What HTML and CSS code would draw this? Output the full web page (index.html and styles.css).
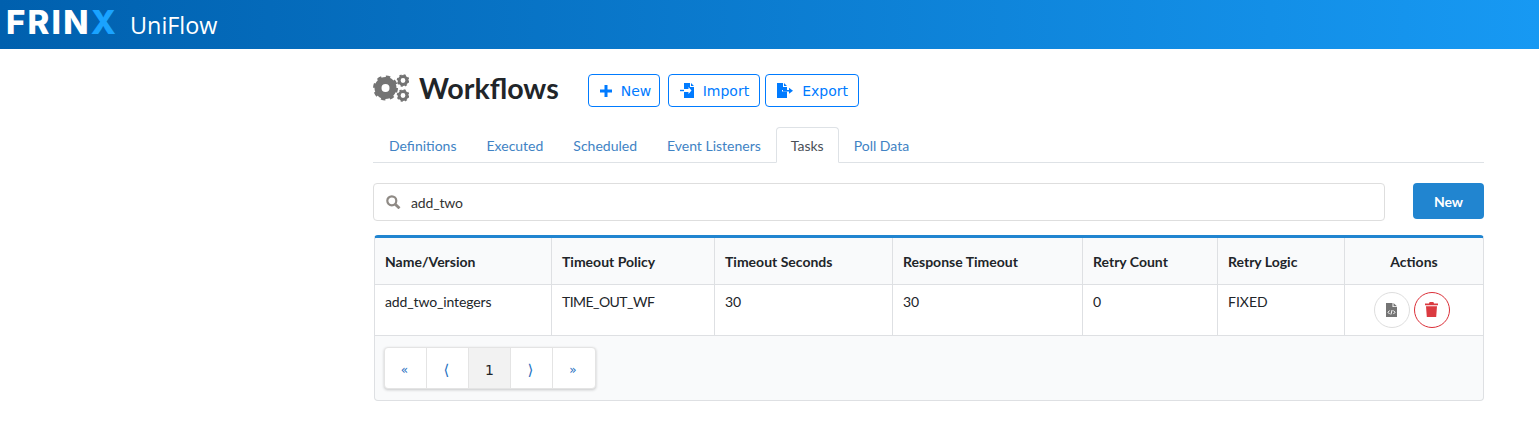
FILE: index.html
```html
<!DOCTYPE html>
<html lang="en">

<head>
    <meta charset="UTF-8">
    <title>UniFlow</title>
    <link rel="stylesheet" href="styles.css">
</head>

<body>
    <div class="topbar">
        <span class="logo">FRIN<span class="logo-x">X</span></span>
        <span class="app-name">UniFlow</span>
    </div>

    <div class="content">
        <div class="title-row">
            <svg class="gears" width="36" height="28" viewBox="0 0 36 28">
                <g fill="none" stroke="#747474">
                    <circle cx="12.5" cy="14" r="7.5" stroke-width="7"/>
                    <circle cx="12.5" cy="14" r="11" stroke-width="3" stroke-dasharray="4.3 4.34"/>
                    <circle cx="30" cy="6.500" r="3.900" stroke-width="3"/>
                    <circle cx="30" cy="6.500" r="5.500" stroke-width="1.600" stroke-dasharray="2.160 2.160"/>
                    <circle cx="30" cy="21.500" r="3.900" stroke-width="3"/>
                    <circle cx="30" cy="21.500" r="5.500" stroke-width="1.600" stroke-dasharray="2.160 2.160"/>
                </g>
            </svg>
            <h1 class="title">Workflows</h1>
            <div class="title-btns">
                <button class="btn-outline btn-add">
                    <svg width="12" height="12" viewBox="0 0 12 12"><path d="M4.500 0h3v4.500H12v3H7.500V12h-3V7.500H0v-3h4.500z" fill="#007bff"/></svg>
                    New
                </button>
                <button class="btn-outline">
                    <svg width="15" height="15" viewBox="0 0 15 15"><path d="M4 0h6v4h4v11H4V9h4.500v2l3-3.500-3-3.500v2H4zM11 0l3 3h-3z" fill="#007bff"/><path d="M0 6.800h4v1.400H0z" fill="#007bff"/></svg>
                    Import
                </button>
                <button class="btn-outline">
                    <svg width="17" height="15" viewBox="0 0 17 15"><path d="M0 0h6v4h4v3H5v1.500h5V15H0zM7 0l3 3H7z" fill="#007bff"/><path d="M6 7h6V4.800L16 7.700l-4 3V8.500H6z" fill="#007bff"/></svg>
                    Export
                </button>
            </div>
        </div>

        <ul class="tabs">
            <li><a href="#">Definitions</a></li>
            <li><a href="#">Executed</a></li>
            <li><a href="#">Scheduled</a></li>
            <li><a href="#">Event Listeners</a></li>
            <li class="active"><a href="#">Tasks</a></li>
            <li><a href="#">Poll Data</a></li>
        </ul>

        <div class="search-row">
            <div class="search">
                <svg width="15" height="14" viewBox="0 0 15 14"><circle cx="5.800" cy="5.800" r="4.500" fill="none" stroke="#8f8a85" stroke-width="2.200"/><path d="M9.200 9.200L13.500 13.300" stroke="#8f8a85" stroke-width="2.800"/></svg>
                <span class="search-text">add_two</span>
            </div>
            <button class="btn-new">New</button>
        </div>

        <div class="table-box">
            <table class="task-table">
                <colgroup>
                    <col class="c1"><col class="c2"><col class="c3"><col class="c4"><col class="c5"><col class="c6"><col>
                </colgroup>
                <thead>
                    <tr>
                        <th>Name/Version</th>
                        <th>Timeout Policy</th>
                        <th>Timeout Seconds</th>
                        <th>Response Timeout</th>
                        <th>Retry Count</th>
                        <th>Retry Logic</th>
                        <th class="center">Actions</th>
                    </tr>
                </thead>
                <tbody>
                    <tr>
                        <td class="name-cell">add_two_integers</td>
                        <td class="policy-cell">TIME_OUT_WF</td>
                        <td>30</td>
                        <td>30</td>
                        <td>0</td>
                        <td>FIXED</td>
                        <td class="center actions">
                            <button class="circle">
                                <svg width="11" height="14" viewBox="0 0 11 14"><path d="M0 0h6.500v4H11v10H0zM7.500 0L11 3.200H7.500z" fill="#747474"/><path d="M3.600 7.500L2 9.300l1.600 1.800M7.400 7.500L9 9.300l-1.600 1.800M6.100 7L4.900 11.500" fill="none" stroke="#fff" stroke-width="1"/></svg>
                            </button>
                            <button class="circle red">
                                <svg width="13" height="15" viewBox="0 0 13 15"><path d="M0 1.500h4L4.600 0h3.800L9 1.500h4V3.300H0zM1 4.300h11L11.200 15H1.800z" fill="#db3a40"/></svg>
                            </button>
                        </td>
                    </tr>
                </tbody>
            </table>
            <div class="table-foot">
                <ul class="pager">
                    <li>«</li>
                    <li class="arrow">⟨</li>
                    <li class="current">1</li>
                    <li class="arrow">⟩</li>
                    <li>»</li>
                </ul>
            </div>
        </div>
    </div>
</body>

</html>
```

FILE: styles.css
```css
* {
    margin: 0;
    padding: 0;
    box-sizing: border-box;
    list-style: none;
    text-decoration: none;
}

body {
    font-family: "Lato", "Liberation Sans", sans-serif;
    font-size: 14px;
    color: #212529;
    background: #fff;
}

.topbar {
    height: 49px;
    display: flex;
    align-items: center;
    padding-left: 6px;
    background: linear-gradient(to right, #0060ae, #1799f3);
}

.logo {
    font-family: "Inter", "Liberation Sans", sans-serif;
    font-weight: 800;
    font-size: 33px;
    letter-spacing: 2.2px;
    color: #fff;
    line-height: 45px;
    height: 49px;
    width: 124px;
}

.logo-x {
    color: #1aa3ff;
}

.app-name {
    font-family: "Open Sans", "Liberation Sans", sans-serif;
    font-size: 23.4px;
    color: #fff;
}

.content {
    width: 1111px;
    margin-left: 373px;
}

.title-row {
    display: flex;
    align-items: center;
    height: 78px;
    padding-top: 5px;
}

.gears {
    margin: -6px 10px 0 0;
}

.title {
    font-size: 28.6px;
    font-weight: 700;
    line-height: 34px;
    margin: -6px 29px 0 0;
}

.title-btns {
    display: flex;
    gap: 5px;
}

.title-btns .btn-add {
    margin-right: 3px;
    width: 72px;
    padding-right: 8px;
    gap: 9px;
}

.btn-outline {
    height: 33px;
    padding: 0 10px 0 11px;
    display: flex;
    align-items: center;
    gap: 8px;
    font-family: "DejaVu Sans", sans-serif;
    font-size: 14px;
    color: #007bff;
    background: #fff;
    border: 1px solid #007bff;
    border-radius: 4px;
}

.btn-outline svg {
    flex-shrink: 0;
}

.tabs {
    display: flex;
    height: 36px;
    padding-left: 1px;
    border-bottom: 1px solid #dee2e6;
}

.tabs li {
    height: 36px;
    padding: 0 14px;
    line-height: 36px;
    border: 1px solid transparent;
    border-radius: 4px 4px 0 0;
}

.tabs a {
    color: #4183c4;
}

.tabs .active {
    background: #fff;
    border-color: #dee2e6 #dee2e6 #fff;
}

.tabs .active a {
    color: #495057;
}

.search-row {
    display: flex;
    align-items: flex-start;
    justify-content: space-between;
    margin-top: 20px;
}

.search {
    width: 1012px;
    height: 38px;
    display: flex;
    align-items: center;
    gap: 10px;
    padding-left: 12px;
    border: 1px solid #dedede;
    border-radius: 4px;
}

.search-text {
    color: #333;
    letter-spacing: -0.15px;
}

.btn-new {
    width: 71px;
    height: 36px;
    font-family: "Lato", sans-serif;
    font-size: 14px;
    font-weight: 700;
    color: #fff;
    background: #2185d0;
    border: 0;
    border-radius: 4px;
}

.table-box {
    margin: 14px 0 0 1px;
    border: 1px solid #dee0e3;
    border-top: 3px solid #2185d0;
    border-radius: 4px;
    overflow: hidden;
    background: #f9fafb;
}

.task-table {
    width: 100%;
    border-collapse: separate;
    border-spacing: 0;
    table-layout: fixed;
    background: #fff;
}

.c1 { width: 176px; }
.c2 { width: 163px; }
.c3 { width: 178px; }
.c4 { width: 190px; }
.c5 { width: 135px; }
.c6 { width: 127px; }

.task-table th {
    height: 47px;
    padding: 0 10px;
    text-align: left;
    font-weight: 700;
    color: #212529;
    background: #f9fafb;
    border-bottom: 1px solid #dee0e3;
    border-left: 1px solid #dee0e3;
}

.task-table td {
    height: 51px;
    padding: 8px 10px 0;
    vertical-align: top;
    color: #212529;
    border-bottom: 1px solid #dee0e3;
    border-left: 1px solid #dee0e3;
}

.task-table th:first-child,
.task-table td:first-child {
    border-left: 0;
}

.task-table .center {
    text-align: center;
}

.task-table .name-cell {
    letter-spacing: -0.13px;
}

.task-table .policy-cell {
    letter-spacing: -0.55px;
}

.task-table .actions {
    padding: 0 5px 0 0;
    vertical-align: middle;
    font-size: 0;
}

.circle {
    display: inline-flex;
    align-items: center;
    justify-content: center;
    width: 36px;
    height: 36px;
    margin: 0 2px;
    background: #fff;
    border: 1px solid #dedede;
    border-radius: 50%;
}

.circle.red {
    border-color: #db2f38;
}

.table-foot {
    height: 64px;
    padding: 11px 9px;
}

.pager {
    display: flex;
    width: 212px;
    height: 42px;
    background: #fff;
    border: 1px solid #e4e4e4;
    border-radius: 4px;
    box-shadow: 0 1px 3px rgba(0, 0, 0, .2);
    overflow: hidden;
}

.pager li {
    flex: 0 0 42px;
    padding: 3px 2px 0 0;
    display: flex;
    align-items: center;
    justify-content: center;
    font-family: "DejaVu Sans", sans-serif;
    font-size: 12px;
    color: #1e70bf;
    border-left: 1px solid #e4e4e4;
}

.pager li:first-child {
    flex-basis: 41px;
    border-left: 0;
}

.pager li:last-child {
    flex-basis: 43px;
}

.pager .arrow {
    font-size: 15px;
}

.pager .current {
    padding-right: 0;
    font-size: 14px;
    color: #212529;
    background: #f2f2f2;
}
```
